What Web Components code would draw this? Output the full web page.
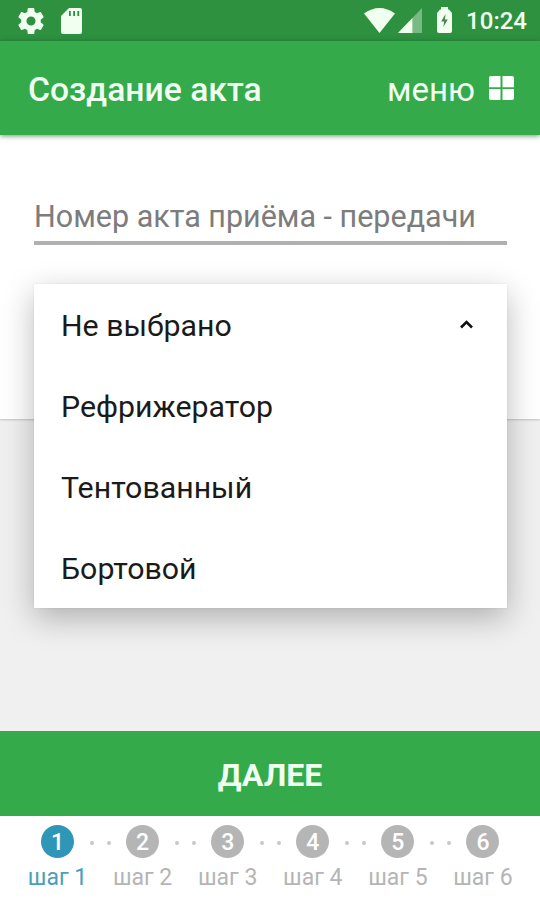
<!DOCTYPE html>
<html lang="ru">
<head>
<meta charset="utf-8">
<title>Создание акта</title>
<style>
  html, body { height: 100%; }
  body { margin: 0; font-family: Roboto, "Noto Sans", sans-serif; overflow: hidden; }
</style>
</head>
<body>
<act-screen>
  <status-bar slot="top" time="10:24"></status-bar>
  <app-bar slot="top">Создание акта<span slot="action">меню</span></app-bar>

  <act-form>
    <text-field label="Номер акта приёма - передачи"></text-field>
    <drop-down>
      <drop-option selected>Не выбрано</drop-option>
      <drop-option>Рефрижератор</drop-option>
      <drop-option>Тентованный</drop-option>
      <drop-option>Бортовой</drop-option>
    </drop-down>
  </act-form>

  <next-button slot="bottom">ДАЛЕЕ</next-button>
  <step-bar slot="bottom" count="6" value="1"></step-bar>
</act-screen>

<script>
(function () {
  function attach(el, html) {
    const template = document.createElement('template');
    template.innerHTML = html;
    const root = el.attachShadow({ mode: 'open' });
    root.append(template.content.cloneNode(true));
    return root;
  }

  class ActScreen extends HTMLElement {
    constructor() {
      super();
      attach(this, `
        <style>
          :host { display: flex; flex-direction: column; height: 900px; background: #f0f0f1; }
          main { flex: 1; min-height: 0; }
          header { position: relative; z-index: 1; }
        </style>
        <header><slot name="top"></slot></header>
        <main><slot></slot></main>
        <footer><slot name="bottom"></slot></footer>
      `);
    }
  }

  class StatusBar extends HTMLElement {
    connectedCallback() {
      attach(this, `
        <style>
          :host {
            display: flex; align-items: center; box-sizing: border-box; height: 41px;
            padding: 0 13px 0 18px; background: #2d9140; color: #f1fff0;
          }
          svg { display: block; fill: currentColor; }
          .sd { margin-left: 17px; }
          .wifi { margin-left: auto; }
          .signal { margin-left: 3px; }
          .battery { margin-left: 15px; margin-top: -1px; }
          time { margin-left: 14px; font-size: 24px; font-weight: 500; line-height: 39px; padding-top: 2px; }
        </style>
        <svg width="26" height="26" viewBox="2 2 20 20"><path d="M19.43 12.98c.04-.32.07-.64.07-.98s-.03-.66-.07-.98l2.11-1.65c.19-.15.24-.42.12-.64l-2-3.46c-.12-.22-.39-.3-.61-.22l-2.49 1c-.52-.4-1.08-.73-1.69-.98l-.38-2.65A.49.49 0 0 0 14 2h-4c-.25 0-.46.18-.49.42l-.38 2.65c-.61.25-1.17.59-1.69.98l-2.49-1c-.23-.09-.49 0-.61.22l-2 3.46c-.13.22-.07.49.12.64l2.11 1.65c-.04.32-.07.65-.07.98s.03.66.07.98l-2.11 1.65c-.19.15-.24.42-.12.64l2 3.46c.12.22.39.3.61.22l2.49-1c.52.4 1.08.73 1.69.98l.38 2.65c.03.24.24.42.49.42h4c.25 0 .46-.18.49-.42l.38-2.65c.61-.25 1.17-.59 1.69-.98l2.49 1c.23.09.49 0 .61-.22l2-3.46c.12-.22.07-.49-.12-.64zM12 15.5a3.5 3.5 0 1 1 0-7 3.5 3.5 0 0 1 0 7z"/></svg>
        <svg class="sd" width="21" height="26" viewBox="0 0 21 26"><path d="M8 0h11a2 2 0 0 1 2 2v22a2 2 0 0 1-2 2H2a2 2 0 0 1-2-2V8zM8 3v5h1.8V3zm4.200 0v5H14V3zm4.200 0v5h1.800V3z" fill-rule="evenodd"/></svg>
        <svg class="wifi" width="31" height="25" viewBox="0 0 31 25"><path d="M0 5.500Q15.500-5.500 31 5.500L15.500 25z"/></svg>
        <svg class="signal" width="24" height="25" viewBox="0 0 24 25"><path d="M24 0v25H0z" opacity=".38"/><path d="M14.400 10v15H0z"/></svg>
        <svg class="battery" width="15" height="26" viewBox="0 0 15 26">
          <path d="M4 0h7v2.500h1L15 6v18a2 2 0 0 1-2 2H2a2 2 0 0 1-2-2V6l3-3.500h1z"/>
          <path d="M8.500 7l-4.300 7.500h3L6.300 20l4.500-7.600H7.900z" fill="#4d7f55"/>
        </svg>
        <time>${this.getAttribute('time')}</time>
      `);
    }
  }

  class AppBar extends HTMLElement {
    constructor() {
      super();
      attach(this, `
        <style>
          :host {
            display: flex; align-items: center; box-sizing: border-box; height: 94px;
            padding: 2px 26px 0 28px; background: #34aa4b; color: #effff0;
            box-shadow: 0 1px 5px rgba(0, 60, 10, .55);
          }
          h1 { margin: 0; font-size: 33.7px; font-weight: 500; line-height: 40px; padding-top: 1px; white-space: nowrap; }
          .action { margin-left: auto; font-size: 33px; line-height: 40px; padding-top: 2px; }
          svg { display: block; margin: -2px 0 0 14px; fill: #fff; }
        </style>
        <h1><slot></slot></h1>
        <span class="action"><slot name="action"></slot></span>
        <svg width="25" height="24" viewBox="0 0 25 24">
          <path d="M2 0h9.500v11.200H0V2a2 2 0 0 1 2-2zM13.500 0H23a2 2 0 0 1 2 2v9.200H13.500zM0 13h11.500v11H2a2 2 0 0 1-2-2zM13.500 13H25v9a2 2 0 0 1-2 2h-9.500z"/>
        </svg>
      `);
    }
  }

  class ActForm extends HTMLElement {
    constructor() {
      super();
      attach(this, `
        <style>
          :host {
            display: block; position: relative; box-sizing: border-box; height: 284px;
            padding: 60px 33px 0 34px; background: #fff; box-shadow: 0 1px 2px rgba(0, 0, 0, .2);
          }
        </style>
        <slot></slot>
      `);
    }
  }

  class TextField extends HTMLElement {
    connectedCallback() {
      attach(this, `
        <style>
          :host { display: block; box-sizing: border-box; height: 50px; border-bottom: 4px solid #b0b0b0; }
          label { display: block; font-size: 30.5px; line-height: 43px; color: #7c7c7c; white-space: nowrap; }
        </style>
        <label>${this.getAttribute('label')}</label>
      `);
    }
  }

  // opened list, lies over the form and the grey area below it
  class DropDown extends HTMLElement {
    constructor() {
      super();
      attach(this, `
        <style>
          :host {
            display: block; position: absolute; top: 149px; left: 34px; right: 33px;
            background: #fff;
            box-shadow: 0 0 2px rgba(0, 0, 0, .08), 0 10px 30px rgba(0, 0, 0, .27);
          }
        </style>
        <slot></slot>
      `);
    }
  }

  class DropOption extends HTMLElement {
    constructor() {
      super();
      attach(this, `
        <style>
          :host {
            display: flex; align-items: center; justify-content: space-between;
            box-sizing: border-box; height: 81px; padding: 2px 34px 0 27px;
            font-size: 30.3px; color: #1a1a1a;
          }
          svg { display: none; margin-top: -2px; }
          :host([selected]) svg { display: block; }
        </style>
        <span><slot></slot></span>
        <svg width="13" height="9" viewBox="0 0 13 9"><path d="M1 7.500l5.500-5.500L12 7.500" fill="none" stroke="#111" stroke-width="2.600"/></svg>
      `);
    }
  }

  class NextButton extends HTMLElement {
    constructor() {
      super();
      attach(this, `
        <style>
          :host { display: block; height: 85px; background: #34aa4b; }
          button {
            display: block; width: 100%; height: 100%; padding: 3px 0 0; border: 0; background: none;
            font: 700 32px Roboto, "Noto Sans", sans-serif; color: #effff0;
          }
        </style>
        <button><slot></slot></button>
      `);
    }
  }

  class StepBar extends HTMLElement {
    connectedCallback() {
      const count = +this.getAttribute('count');
      const value = +this.getAttribute('value');
      let steps = '';
      for (let i = 1; i <= count; i += 1) {
        if (i > 1) {
          steps += '<div class="dots"><i></i><i></i></div>';
        }
        steps += `<div class="step ${i === value ? 'active' : ''}"><b>${i}</b><span>шаг ${i}</span></div>`;
      }
      attach(this, `
        <style>
          :host {
            display: flex; box-sizing: border-box; height: 84px;
            padding: 9px 27px 0 27.5px; background: #fff;
          }
          .step {
            display: flex; flex-direction: column; align-items: center; flex: none;
            width: 60px; color: #b5b5b5;
          }
          b {
            width: 33px; height: 33px; border-radius: 50%; background: #b5b5b5; color: #fff;
            font-size: 23px; font-weight: 500; line-height: 35px; text-align: center;
          }
          span { margin-top: 6px; font-size: 23px; line-height: 28px; white-space: nowrap; }
          .active { color: #4ba0b9; }
          .active b { background: #3096b7; }
          .dots { display: flex; flex: 1; justify-content: center; gap: 13px; padding-top: 16px; }
          i { flex: none; width: 4px; height: 4px; border-radius: 50%; background: #c8c8c8; }
        </style>
        ${steps}
      `);
    }
  }

  customElements.define('act-screen', ActScreen);
  customElements.define('status-bar', StatusBar);
  customElements.define('app-bar', AppBar);
  customElements.define('act-form', ActForm);
  customElements.define('text-field', TextField);
  customElements.define('drop-down', DropDown);
  customElements.define('drop-option', DropOption);
  customElements.define('next-button', NextButton);
  customElements.define('step-bar', StepBar);
}());
</script>
</body>
</html>
